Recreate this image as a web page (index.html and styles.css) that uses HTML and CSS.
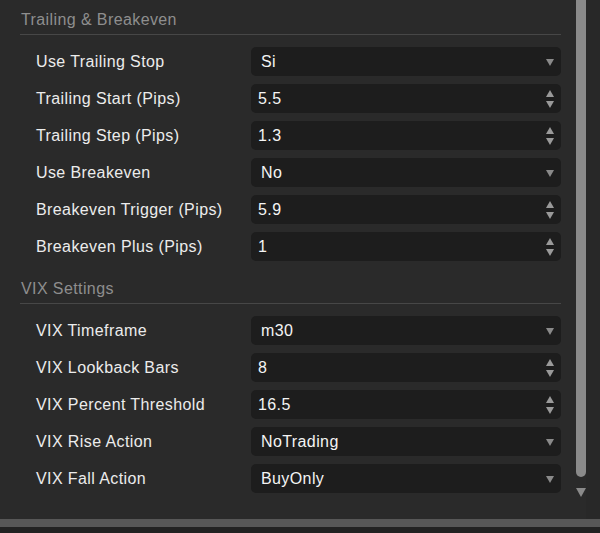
FILE: index.html
```html
<!DOCTYPE html>
<html>
<head>
<meta charset="utf-8">
<link rel="stylesheet" href="styles.css">
</head>
<body>
<div class="window">
  <div class="main">
    <div class="content">
      <div class="section">
        <div class="section-title">Trailing &amp; Breakeven</div>
        <div class="rows">
          <div class="row"><div class="label">Use Trailing Stop</div><div class="ctrl select"><span class="val">Si</span><span class="caret"></span></div></div>
          <div class="row"><div class="label">Trailing Start (Pips)</div><div class="ctrl num"><span class="val">5.5</span><span class="spin"><i class="up"></i><i class="down"></i></span></div></div>
          <div class="row"><div class="label">Trailing Step (Pips)</div><div class="ctrl num"><span class="val">1.3</span><span class="spin"><i class="up"></i><i class="down"></i></span></div></div>
          <div class="row"><div class="label">Use Breakeven</div><div class="ctrl select"><span class="val">No</span><span class="caret"></span></div></div>
          <div class="row"><div class="label">Breakeven Trigger (Pips)</div><div class="ctrl num"><span class="val">5.9</span><span class="spin"><i class="up"></i><i class="down"></i></span></div></div>
          <div class="row"><div class="label">Breakeven Plus (Pips)</div><div class="ctrl num"><span class="val">1</span><span class="spin"><i class="up"></i><i class="down"></i></span></div></div>
        </div>
      </div>
      <div class="section second">
        <div class="section-title">VIX Settings</div>
        <div class="rows">
          <div class="row"><div class="label">VIX Timeframe</div><div class="ctrl select"><span class="val">m30</span><span class="caret"></span></div></div>
          <div class="row"><div class="label">VIX Lookback Bars</div><div class="ctrl num"><span class="val">8</span><span class="spin"><i class="up"></i><i class="down"></i></span></div></div>
          <div class="row"><div class="label">VIX Percent Threshold</div><div class="ctrl num"><span class="val">16.5</span><span class="spin"><i class="up"></i><i class="down"></i></span></div></div>
          <div class="row"><div class="label">VIX Rise Action</div><div class="ctrl select"><span class="val">NoTrading</span><span class="caret"></span></div></div>
          <div class="row"><div class="label">VIX Fall Action</div><div class="ctrl select"><span class="val">BuyOnly</span><span class="caret"></span></div></div>
        </div>
      </div>
    </div>
    <div class="vscroll">
      <div class="thumb"></div>
      <div class="arrow-down"></div>
    </div>
    <div class="edge"></div>
  </div>
  <div class="hbar"></div>
  <div class="footer"></div>
</div>
</body>
</html>
```

FILE: styles.css
```css
html, body {
  margin: 0;
  padding: 0;
  background: #2a2a2a;
  font-family: "Liberation Sans", Arial, sans-serif;
  font-size: 16px;
  letter-spacing: 0.4px;
  overflow: hidden;
}

.window {
  width: 600px;
  height: 533px;
  display: flex;
  flex-direction: column;
}

.main {
  height: 519px;
  display: flex;
  flex-direction: row;
}

.content {
  width: 541px;
  padding-left: 20px;
  display: flex;
  flex-direction: column;
}

.section {
  padding-top: 11px;
  display: flex;
  flex-direction: column;
}

.section.second {
  padding-top: 19px;
}

.section-title {
  color: #8e8e8e;
  line-height: 18px;
  height: 18px;
  padding-left: 1px;
  padding-bottom: 5px;
  border-bottom: 1px solid #474747;
}

.rows {
  display: flex;
  flex-direction: column;
  gap: 8px;
  padding-top: 12px;
  padding-left: 16px;
}

.row {
  height: 29px;
  display: flex;
  align-items: center;
}

.label {
  width: 215px;
  color: #ececec;
  padding-top: 1px;
}

.ctrl {
  width: 310px;
  height: 29px;
  background: #1d1d1d;
  border-radius: 5px;
  display: flex;
  align-items: center;
  justify-content: space-between;
  color: #f4f4f4;
  box-sizing: border-box;
}

.val {
  padding-top: 1px;
}

.ctrl.select {
  padding: 0 7px 0 10px;
}

.ctrl.num {
  padding: 0 7px 0 7px;
}

.caret {
  width: 0;
  height: 0;
  border-left: 4px solid transparent;
  border-right: 4px solid transparent;
  border-top: 7px solid #8a8a8a;
  margin-top: 1px;
}

.spin {
  display: flex;
  flex-direction: column;
  gap: 4px;
}

.spin i {
  display: block;
  width: 0;
  height: 0;
  border-left: 4px solid transparent;
  border-right: 4px solid transparent;
}

.spin .up {
  border-bottom: 7px solid #9a9a9a;
}

.spin .down {
  border-top: 7px solid #9a9a9a;
}

.vscroll {
  margin-left: 15px;
  width: 10px;
  display: flex;
  flex-direction: column;
  align-items: center;
}

.thumb {
  width: 10px;
  height: 477px;
  background: #8a8a8a;
  border-radius: 0 0 5px 5px;
}

.arrow-down {
  margin-top: 11px;
  width: 0;
  height: 0;
  border-left: 5px solid transparent;
  border-right: 5px solid transparent;
  border-top: 9px solid #8a8a8a;
}

.edge {
  flex: 1;
  background: #282828;
}

.hbar {
  height: 8px;
  background: #575757;
}

.footer {
  flex: 1;
  background: #222222;
}
```
